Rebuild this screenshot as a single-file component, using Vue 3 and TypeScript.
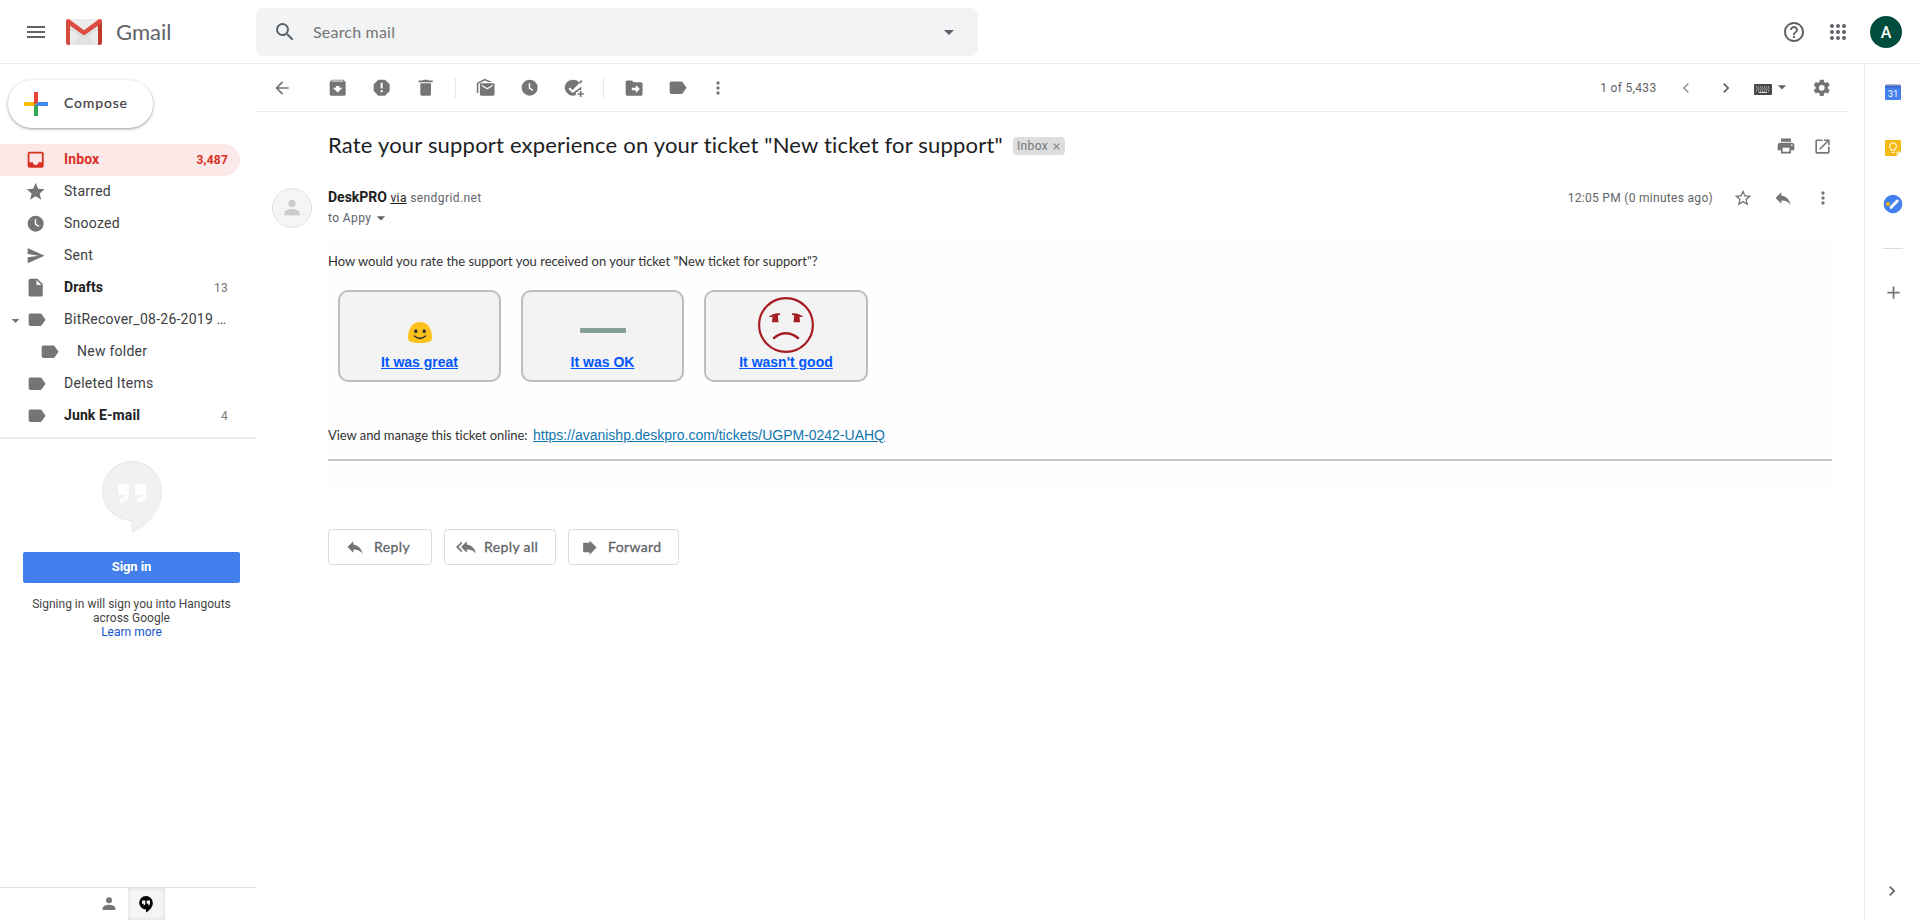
<script setup lang="ts">
import { h, type FunctionalComponent } from 'vue'

const paths: Record<string, string> = {
  menu: 'M3 18h18v-2H3v2zm0-5h18v-2H3v2zm0-7v2h18V6H3z',
  search: 'M15.5 14h-.79l-.28-.27A6.47 6.47 0 0 0 16 9.5 6.5 6.5 0 1 0 9.5 16c1.61 0 3.09-.59 4.23-1.57l.27.28v.79l5 4.99L20.49 19l-4.99-5zm-6 0a4.5 4.5 0 1 1 0-9 4.5 4.5 0 0 1 0 9z',
  drop: 'M7 10l5 5 5-5z',
  help: 'M11 18h2v-2h-2v2zm1-16C6.48 2 2 6.48 2 12s4.48 10 10 10 10-4.48 10-10S17.52 2 12 2zm0 18c-4.41 0-8-3.59-8-8s3.59-8 8-8 8 3.59 8 8-3.59 8-8 8zm0-14c-2.21 0-4 1.79-4 4h2c0-1.1.9-2 2-2s2 .9 2 2c0 2-3 1.75-3 5h2c0-2.25 3-2.5 3-5 0-2.21-1.79-4-4-4z',
  apps: 'M6 8a2 2 0 1 0 0-4 2 2 0 0 0 0 4zm6 12a2 2 0 1 0 0-4 2 2 0 0 0 0 4zm-6 0a2 2 0 1 0 0-4 2 2 0 0 0 0 4zm0-6a2 2 0 1 0 0-4 2 2 0 0 0 0 4zm6 0a2 2 0 1 0 0-4 2 2 0 0 0 0 4zm4-8a2 2 0 1 0 4 0 2 2 0 0 0-4 0zm-4 2a2 2 0 1 0 0-4 2 2 0 0 0 0 4zm6 6a2 2 0 1 0 0-4 2 2 0 0 0 0 4zm0 6a2 2 0 1 0 0-4 2 2 0 0 0 0 4z',
  back: 'M20 11H7.83l5.59-5.59L12 4l-8 8 8 8 1.41-1.41L7.83 13H20v-2z',
  archive: 'M20.54 5.23l-1.39-1.68C18.88 3.21 18.47 3 18 3H6c-.47 0-.88.21-1.16.55L3.46 5.23C3.17 5.57 3 6.02 3 6.5V19c0 1.1.9 2 2 2h14c1.1 0 2-.9 2-2V6.5c0-.48-.17-.93-.46-1.27zM12 17.5L6.5 12H10v-2h4v2h3.5L12 17.5zM5.12 5l.81-1h12l.94 1H5.12z',
  spam: 'M15.73 3H8.27L3 8.27v7.46L8.27 21h7.46L21 15.73V8.27L15.73 3zM12 17.3a1.3 1.3 0 1 1 0-2.6 1.3 1.3 0 0 1 0 2.6zm1.1-4.3h-2.2V6.500h2.2V13z',
  trash: 'M6 19c0 1.1.9 2 2 2h8c1.1 0 2-.9 2-2V7H6v12zM19 4h-3.500l-1-1h-5l-1 1H4v2h16V4z',
  unread: 'M22 8.500v11c0 .8-.7 1.500-1.500 1.500H7c-.8 0-1.500-.7-1.500-1.500v-11C5.500 7.700 6.200 7 7 7h13.500c.8 0 1.500.7 1.500 1.500zM13.750 14l6.250-3.800V8.600L13.750 12.400 7.500 8.600v1.600L13.750 14zM2 18V7.500c0-.6.300-1.100.8-1.400L11 2l8.500 3.600H15L11 3.900 3.800 7.500V18H2z',
  clock: 'M12 3a9 9 0 1 0 0 18 9 9 0 0 0 0-18zm3.300 12.700L11 13V7h1.600v5.200l3.600 2.200-.9 1.300z',
  addtask: 'M11 3a9 9 0 1 0 3.500 17.300V17H17v-2h3c.6-1.200.8-2.500.6-4l-9.900 7-4.500-4.500 1.700-1.700 2.800 2.800 8.100-8.200A9 9 0 0 0 11 3zM20.300 3.300L22 5l-3 3-1.500-1.500 2.800-3.200zM19 16v2.300h-2.500V20H19v2.500h1.800V20h2.500v-1.700h-2.500V16H19z',
  move: 'M20 6h-8l-2-2H5c-1.100 0-2 .9-2 2v13c0 1.100.9 2 2 2h15c1.100 0 2-.9 2-2V8c0-1.100-.9-2-2-2zm-5.500 12v-3H10v-3h4.500V9l4.500 4.500-4.500 4.500z',
  label: 'M17.630 5.840C17.270 5.330 16.670 5 16 5L5 5.010C3.900 5.010 3 5.900 3 7v10c0 1.100.9 1.990 2 1.990L16 19c.67 0 1.270-.33 1.630-.84L22 12l-4.370-6.160z',
  more: 'M12 8a2 2 0 1 0 0-4 2 2 0 0 0 0 4zm0 2a2 2 0 1 0 0 4 2 2 0 0 0 0-4zm0 6a2 2 0 1 0 0 4 2 2 0 0 0 0-4z',
  left: 'M15.410 7.410L14 6l-6 6 6 6 1.410-1.410L10.830 12z',
  right: 'M10 6L8.590 7.410 13.170 12l-4.580 4.590L10 18l6-6z',
  gear: 'M19.430 12.980c.04-.32.07-.64.07-.98s-.03-.66-.07-.98l2.110-1.650c.19-.15.24-.42.12-.64l-2-3.460c-.12-.22-.39-.3-.61-.22l-2.490 1c-.52-.4-1.080-.73-1.690-.98l-.38-2.650A.488.488 0 0 0 14 2h-4c-.25 0-.46.18-.49.42l-.38 2.650c-.61.25-1.170.59-1.690.98l-2.490-1c-.23-.09-.49 0-.61.22l-2 3.460c-.13.22-.07.49.12.64l2.110 1.650c-.04.32-.07.65-.07.98s.03.66.07.98l-2.110 1.650c-.19.15-.24.42-.12.64l2 3.460c.12.22.39.3.61.22l2.490-1c.52.4 1.080.73 1.690.98l.38 2.650c.03.24.24.42.49.42h4c.25 0 .46-.18.49-.42l.38-2.650c.61-.25 1.170-.59 1.690-.98l2.490 1c.23.09.49 0 .61-.22l2-3.460c.12-.22.07-.49-.12-.64l-2.110-1.650zM12 15.500a3.500 3.500 0 1 1 0-7 3.500 3.500 0 0 1 0 7z',
  print: 'M19 8H5c-1.660 0-3 1.340-3 3v6h4v4h12v-4h4v-6c0-1.660-1.340-3-3-3zm-3 11H8v-5h8v5zm3-7c-.55 0-1-.45-1-1s.45-1 1-1 1 .45 1 1-.45 1-1 1zm-1-9H6v4h12V3z',
  open: 'M19 19H5V5h7V3H5a2 2 0 0 0-2 2v14a2 2 0 0 0 2 2h14c1.100 0 2-.9 2-2v-7h-2v7zM14 3v2h3.590l-9.830 9.830 1.410 1.410L19 6.410V10h2V3h-7z',
  star: 'M12 17.270L18.180 21l-1.640-7.030L22 9.240l-7.190-.61L12 2 9.190 8.630 2 9.240l5.460 4.730L5.820 21z',
  starOutline: 'M22 9.240l-7.190-.62L12 2 9.190 8.630 2 9.240l5.460 4.730L5.820 21 12 17.270 18.180 21l-1.630-7.030L22 9.240zM12 15.400l-3.760 2.270 1-4.280-3.320-2.880 4.380-.38L12 6.100l1.710 4.040 4.380.38-3.320 2.880 1 4.280L12 15.400z',
  reply: 'M10 9V5l-7 7 7 7v-4.100c5 0 8.500 1.600 11 5.100-1-5-4-10-11-11z',
  replyAll: 'M7 8V5l-7 7 7 7v-3l-4-4 4-4zm6 1V5l-7 7 7 7v-4.100c5 0 8.500 1.600 11 5.100-1-5-4-10-11-11z',
  forward: 'M4 6h8V3l9 9-9 9v-3H4z',
  inbox: 'M19 3H5a2 2 0 0 0-2 2v14a2 2 0 0 0 2 2h14a2 2 0 0 0 2-2V5a2 2 0 0 0-2-2zm0 12h-4a3 3 0 0 1-6 0H5V5h14v10z',
  send: 'M3 20.500l19-8.500L3 3.500v6.700L15.500 12 3 13.800z',
  draft: 'M14 2H6c-1.100 0-2 .9-2 2v16c0 1.100.9 2 2 2h12c1.100 0 2-.9 2-2V8l-6-6zm-1 7V3.500L18.500 9H13z',
  person: 'M12 11a4 4 0 1 0 0-8 4 4 0 0 0 0 8zm0 2c-3 0-8.500 1.400-8.500 4.700V20h17v-2.300C20.500 14.400 15 13 12 13z',
  plus: 'M19 13h-6v6h-2v-6H5v-2h6V5h2v6h6v2z',
  close: 'M19 6.400L17.600 5 12 10.600 6.400 5 5 6.400l5.600 5.600L5 17.600 6.400 19l5.600-5.600 5.600 5.600 1.400-1.400-5.600-5.600z',
}

const Icon: FunctionalComponent<{ name: string; size?: number }> = (props) =>
  h('svg', { width: props.size ?? 21.33, height: props.size ?? 21.33, viewBox: '0 0 24 24', fill: 'currentColor' }, [
    h('path', { d: paths[props.name], 'fill-rule': 'evenodd' }),
  ])
Icon.props = ['name', 'size']

interface Folder {
  label: string
  icon: string
  count?: string
  bold?: boolean
  active?: boolean
  expand?: boolean
  child?: boolean
}

const folders: Folder[] = [
  { label: 'Inbox', icon: 'inbox', count: '3,487', bold: true, active: true },
  { label: 'Starred', icon: 'star' },
  { label: 'Snoozed', icon: 'clock' },
  { label: 'Sent', icon: 'send' },
  { label: 'Drafts', icon: 'draft', count: '13', bold: true },
  { label: 'BitRecover_08-26-2019 …', icon: 'label', expand: true },
  { label: 'New folder', icon: 'label', child: true },
  { label: 'Deleted Items', icon: 'label' },
  { label: 'Junk E-mail', icon: 'label', count: '4', bold: true },
]

const toolGroups: string[][] = [
  ['archive', 'spam', 'trash'],
  ['unread', 'clock', 'addtask'],
  ['move', 'label', 'more'],
]
</script>

<template>
  <div class="gmail">
    <header class="header">
      <div class="brand">
        <Icon name="menu" :size="24" />
        <svg class="logo" width="36" height="26" viewBox="0 0 36 26">
          <rect x="2" width="32" height="26" rx="1.500" fill="#ececec" />
          <path d="M4 26L14 16l4 3 4-3 10 10z" fill="#e2e2e2" />
          <path d="M4 6l14 10.500L32 6v5L18 20 4 11z" fill="#d5d5d5" opacity=".5" />
          <path d="M0 2.500v21.300C0 25 .9 26 2.200 26H4V5z" fill="#d54b3d" />
          <path d="M36 2.500v21.300c0 1.200-.9 2.200-2.200 2.200H32V5z" fill="#c0392b" />
          <path d="M0 2.300C0 .2 2 -.5 3.500.5L18 11.300 32.500.5C34 -.5 36 .2 36 2.300c0 1.200-.6 1.900-1.300 2.400L18 16.500 1.300 4.700C.6 4.200 0 3.500 0 2.300z" fill="#de4b3f" />
        </svg>
        <span class="wordmark">Gmail</span>
      </div>
      <div class="search">
        <Icon name="search" :size="24" />
        <span class="placeholder">Search mail</span>
        <Icon name="drop" :size="24" />
      </div>
      <div class="account">
        <Icon name="help" :size="24" />
        <Icon name="apps" :size="24" />
        <div class="me">A</div>
      </div>
    </header>

    <div class="body">
      <aside class="sidebar">
        <button class="compose">
          <svg width="24" height="24" viewBox="0 0 24 24">
            <path d="M10 0h4v10l-4 4z" fill="#ea4335" />
            <path d="M0 10h10v4H0z" fill="#fbbc04" />
            <path d="M10 14l4-4v14h-4z" fill="#34a853" />
            <path d="M14 10h10v4H12z" fill="#4285f4" />
          </svg>
          <span>Compose</span>
        </button>
        <nav>
          <div
            v-for="f in folders"
            :key="f.label"
            class="folder"
            :class="{ active: f.active, bold: f.bold, child: f.child, tag: f.icon === 'label' }"
          >
            <span class="twisty"><Icon v-if="f.expand" name="drop" :size="19" /></span>
            <Icon :name="f.icon" />
            <span class="name">{{ f.label }}</span>
            <span class="count">{{ f.count }}</span>
          </div>
        </nav>
        <div class="hangouts">
          <svg class="bubble" width="60" height="72" viewBox="0 0 60 72">
            <path d="M30 .5C13.700.5.5 13.700.5 30S13.700 59.500 30 59.500V71.500C45 64 59.500 49 59.500 30 59.500 13.700 46.300.5 30 .5z" fill="#f1f1f1" stroke="#e8e8e8" />
            <path d="M16 25q0-2 2-2h7q2 0 2 2v8q0 8-9 8v-3q4 0 5-4h-5q-2 0-2-2zM33 25q0-2 2-2h7q2 0 2 2v8q0 8-9 8v-3q4 0 5-4h-5q-2 0-2-2z" fill="#fff" />
          </svg>
          <button class="signin">Sign in</button>
          <p>Signing in will sign you into Hangouts<br />across Google<br /><a>Learn more</a></p>
        </div>
        <div class="tabs">
          <div class="tab"><Icon name="person" :size="18" /></div>
          <div class="tab on">
            <svg width="14" height="17" viewBox="0 0 14 17">
              <path d="M7 0a6.800 6.800 0 0 0 0 13.600V16.500C10.500 14.500 13.800 11.300 13.800 6.800A6.800 6.800 0 0 0 7 0z" fill="#000" />
              <path d="M3 4.500h3.300v3Q6.300 9.500 4.300 9.500L5 7.800H3zM7.700 4.500H11v3Q11 9.500 9 9.500l.7-1.700h-2z" fill="#f5f5f5" />
            </svg>
          </div>
        </div>
      </aside>

      <main class="main">
        <div class="toolbar">
          <div class="tool back"><Icon name="back" :size="20" /></div>
          <div v-for="(group, i) in toolGroups" :key="i" class="group">
            <div v-for="t in group" :key="t" class="tool" :class="t">
              <Icon :name="t" :size="t === 'more' ? 20 : 21.33" />
            </div>
          </div>
          <div class="pager">
            <span>1 of 5,433</span>
            <Icon class="dim prev" name="left" :size="20" />
            <Icon class="next" name="right" :size="20" />
            <svg class="keyboard" width="18" height="11" viewBox="0 0 18 11">
              <rect width="18" height="11" rx="1" fill="#484848" />
              <path d="M2 3h14M2.500 5h13M2 7h14" stroke="#ddd" stroke-width="1" stroke-dasharray="1 1" />
              <path d="M5 8.500h8" stroke="#ddd" />
            </svg>
            <Icon class="caret" name="drop" :size="20" />
            <Icon class="gear" name="gear" :size="19.5" />
          </div>
        </div>

        <div class="subject">
          <h1>Rate your support experience on your ticket "New ticket for support"</h1>
          <span class="chip">Inbox <Icon name="close" :size="11" /></span>
          <div class="subject-actions">
            <Icon name="print" :size="20" />
            <Icon name="open" :size="19" />
          </div>
        </div>

        <div class="sender">
          <div class="avatar"><Icon name="person" :size="22" /></div>
          <div class="who">
            <div class="from"><b>DeskPRO</b> <u>via</u> <span>sendgrid.net</span></div>
            <div class="to">to Appy <Icon name="drop" :size="20" /></div>
          </div>
          <div class="meta">
            <span>12:05 PM (0 minutes ago)</span>
            <Icon name="starOutline" :size="20" />
            <Icon name="reply" :size="20" />
            <Icon name="more" :size="20" />
          </div>
        </div>

        <section class="message">
          <p class="question">How would you rate the support you received on your ticket "New ticket for support"?</p>
          <div class="ratings">
            <div class="rating">
              <svg class="smile" width="24" height="21" viewBox="0 0 24 21">
                <path d="M12 0C5 0 0 5 0 16.500 0 19.500 4 21 12 21s12-1.500 12-4.500C24 5 19 0 12 0z" fill="#fcc21b" />
                <ellipse cx="7.800" cy="9.200" rx="1.600" ry="2" fill="#2f2f2f" />
                <ellipse cx="16.200" cy="9.200" rx="1.600" ry="2" fill="#2f2f2f" />
                <path d="M6.500 14q5.500 4.800 11 0" fill="none" stroke="#2f2f2f" stroke-width="1.500" stroke-linecap="round" />
              </svg>
              <a>It was great</a>
            </div>
            <div class="rating">
              <div class="dash"></div>
              <a>It was OK</a>
            </div>
            <div class="rating wide">
              <svg class="frown" width="56" height="56" viewBox="0 0 56 56">
                <circle cx="28" cy="28" r="26.900" fill="none" stroke="#a61c22" stroke-width="2.200" />
                <path d="M10.500 20q5-4.500 11.500-3.700v1.500l-2.200.7.700 6.800h-6.500l.5-5.500q-2 .2-4 .2zM45.500 20q-5-4.500-11.500-3.700v1.500l2.200.7-.7 6.800h6.500l-.5-5.500q2 .2 4 .2z" fill="#a61c22" />
                <path d="M16 41q11.500-9.500 24 0" fill="none" stroke="#a61c22" stroke-width="2.500" stroke-linecap="round" />
              </svg>
              <a>It wasn't good</a>
            </div>
          </div>
          <p class="manage">
            <span>View and manage this ticket online:</span>
            <a>https://avanishp.deskpro.com/tickets/UGPM-0242-UAHQ</a>
          </p>
        </section>

        <div class="replies">
          <button class="r1"><Icon name="reply" :size="20" /><span>Reply</span></button>
          <button class="r2"><Icon name="replyAll" :size="20" /><span>Reply all</span></button>
          <button class="r3"><Icon name="forward" :size="19" /><span>Forward</span></button>
        </div>
      </main>

      <aside class="panel">
        <svg width="16" height="16" viewBox="0 0 16 16">
          <rect x=".5" width="15" height="4" fill="#b4bccb" />
          <rect y="1.500" width="16" height="3" fill="#3c64c8" />
          <rect y="3.500" width="16" height="12.500" rx=".8" fill="#4380ee" />
          <text x="8" y="13" text-anchor="middle" font-size="9.500" fill="#fff">31</text>
        </svg>
        <svg width="16" height="16" viewBox="0 0 16 16">
          <path d="M1 0h14q1 0 1 1v10.500L11.500 16H1q-1 0-1-1V1q0-1 1-1z" fill="#f5b912" />
          <path d="M16 11.500h-4.500V16z" fill="#fce8b0" />
          <path d="M6.300 10.300V9.300a3.400 3.400 0 1 1 3.400 0v1zM6.300 12.500h3.400" fill="none" stroke="#fff3cf" stroke-width="1.200" />
        </svg>
        <svg width="20" height="20" viewBox="0 0 20 20">
          <circle cx="10" cy="10" r="9.300" fill="#4380ee" />
          <circle cx="5" cy="10" r="2" fill="#f7b908" />
          <path d="M8.200 13.300l6-6.300" stroke="#fff" stroke-width="3" stroke-linecap="round" />
        </svg>
        <div class="rule"></div>
        <Icon name="plus" :size="21" />
        <Icon class="expand" name="right" :size="20" />
      </aside>
    </div>
  </div>
</template>

<style>
body { margin: 0; background: #fff; }
</style>

<style scoped>
.gmail { width: 1920px; height: 920px; display: flex; flex-direction: column; overflow: hidden; font-family: Roboto, sans-serif; color: #202124; }
svg { display: block; flex: none; }
button { font-family: inherit; margin: 0; }
p { margin: 0; }

.header { height: 64px; box-sizing: border-box; border-bottom: 1px solid #ebebeb; display: flex; align-items: center; color: #5f6368; padding-top: 1px; }
.brand { width: 256px; box-sizing: border-box; padding-left: 24px; display: flex; align-items: center; }
.logo { margin-left: 18px; }
.wordmark { font-family: Lato, sans-serif; font-size: 22px; margin: -1px 0 0 14px; letter-spacing: 0; }
.search { width: 722px; height: 48px; box-sizing: border-box; border-radius: 8px; background: #f1f3f4; display: flex; align-items: center; padding: 0 17px; }
.placeholder { flex: 1; margin: -1px 0 0 16px; font-family: Lato, sans-serif; font-size: 16px; color: #757575; letter-spacing: 0.2px; }
.account { margin-left: auto; display: flex; align-items: center; gap: 20px; padding-right: 18px; }
.me { width: 32px; height: 32px; border-radius: 50%; background: #004d40; color: #fff; font-size: 16px; line-height: 34px; text-align: center; font-weight: 500; }

.body { flex: 1; display: flex; min-height: 0; }
.sidebar { width: 256px; display: flex; flex-direction: column; }
.compose { align-self: flex-start; width: 145px; height: 48px; margin: 16px 0 16px 8px; border: 0; border-radius: 24px; background: #fff; box-shadow: 0 1px 2px rgba(60, 64, 67, .35), 0 1px 3px 1px rgba(60, 64, 67, .15); padding: 0 16px; display: flex; align-items: center; gap: 16px; font-family: Lato, sans-serif; font-size: 14px; letter-spacing: .85px; color: #3c4043; }
.compose span { margin-top: -3px; -webkit-text-stroke: .2px #3c4043; }
.folder { width: 240px; height: 32px; box-sizing: border-box; border-radius: 0 16px 16px 0; display: flex; align-items: center; padding-right: 12px; color: #757575; font-size: 14px; letter-spacing: .2px; }
.folder .twisty { width: 25px; height: 19px; flex: none; box-sizing: border-box; padding-left: 6px; }
.folder .name { margin: -2px 0 0 17.700px; flex: 1; color: #3c4043; letter-spacing: .25px; white-space: nowrap; }
.folder .count { font-size: 12px; letter-spacing: .3px; }
.folder.tag .twisty { width: 26.300px; }
.folder.tag .name { margin-left: 16.400px; }
.folder.child { padding-left: 13px; }
.folder.bold .name { font-weight: 700; color: #202124; letter-spacing: .1px; }
.folder.active { background: #fce8e6; color: #d93025; }
.folder.active .name { color: #d93025; }
.folder.active .count { font-weight: 700; font-size: 12px; letter-spacing: .2px; margin-top: -1px; }

.hangouts { flex: 1; margin-top: 5px; border-top: 2px solid #ededed; display: flex; flex-direction: column; align-items: center; font-size: 12px; text-align: center; color: #444; }
.bubble { margin: 22px 0 0 8px; }
.signin { width: 217px; height: 31px; margin: 19px 0 0 7px; border: 0; border-radius: 2px; background: #427fed; color: #fff; font-size: 13px; font-weight: 700; line-height: 30px; letter-spacing: -.1px; padding: 0 0 1px; }
.hangouts p { margin: 14px 0 0 7px; line-height: 14px; letter-spacing: 0; }
.hangouts a { color: #1155cc; }
.tabs { height: 33px; box-sizing: border-box; border-top: 1px solid #e2e2e2; display: flex; justify-content: center; padding-right: 1px; }
.tab { width: 37px; display: flex; align-items: center; justify-content: center; color: #757575; }
.tab.on { background: #f5f5f5; box-shadow: inset 0 0 4px rgba(0, 0, 0, .12); }

.main { width: 1608px; box-sizing: border-box; color: #757575; }
.toolbar { width: 1592px; height: 48px; box-sizing: border-box; border-bottom: 1px solid #ebebeb; display: flex; align-items: center; padding: 1px 17px 0 4px; }
.tool { width: 44px; display: flex; justify-content: center; }
.back { margin-right: 12px; }
.group { display: flex; align-items: center; }
.group + .group { margin-left: 7px; padding-left: 8px; border-left: 1px solid #e6e6e6; height: 20px; }
.tool.more { width: 36px; }
.pager { margin-left: auto; display: flex; align-items: center; font-size: 12px; letter-spacing: .33px; height: 20px; color: #5f6368; }
.prev { margin-left: 19px; color: #9e9e9e; }
.next { margin-left: 20px; }
.keyboard { margin: 3px 0 0 18px; }
.caret { margin: -3px 0 0 0; }
.gear { margin-left: 20px; color: #757575; }

.subject { height: 68px; box-sizing: border-box; display: flex; align-items: center; padding: 0 32px 0 72px; width: 1608px; }
.subject h1 { margin: -3px 0 0; width: 675px; font-family: Lato, sans-serif; font-size: 22px; font-weight: 400; color: #202124; white-space: nowrap; letter-spacing: .2px; }
.chip { margin-left: 10px; height: 18px; width: 52px; box-sizing: border-box; padding: 0 3px 0 4px; border-radius: 4px; background: #ddd; color: #777; font-size: 12px; letter-spacing: .35px; display: flex; align-items: center; justify-content: space-between; }
.subject-actions { margin-left: auto; display: flex; align-items: center; gap: 17px; color: #757575; }

.sender { height: 56px; display: flex; padding: 8px 31px 0 16px; box-sizing: border-box; }
.avatar { width: 40px; height: 40px; box-sizing: border-box; border: 1px solid #e2e2e2; border-radius: 50%; background: #f5f5f5; color: #ccc; display: flex; align-items: center; justify-content: center; }
.who { margin: -1px 0 0 16px; font-size: 12px; letter-spacing: .4px; color: #5f6368; }
.from { line-height: 20px; white-space: nowrap; }
.from b { font-size: 14px; color: #202124; letter-spacing: 0; }
.from u { color: #222; }
.to { line-height: 20px; display: flex; align-items: center; }
.meta { margin-left: auto; height: 20px; display: flex; align-items: center; font-size: 12px; letter-spacing: .3px; color: #5f6368; }
.meta svg { margin-left: 20px; color: #757575; }

.message { margin: 0 32px 0 72px; height: 254px; background: #fefefe; color: #333; display: flex; flex-direction: column; }
.question { height: 54px; line-height: 51px; font-family: Lato, sans-serif; font-size: 13px; white-space: nowrap; }
.ratings { display: flex; gap: 20px; padding-left: 10px; }
.rating { width: 163px; height: 92px; box-sizing: border-box; border: 2px solid #bdbdbd; border-radius: 10px; background: #f3f3f3; display: flex; flex-direction: column; align-items: center; justify-content: flex-end; padding-bottom: 10px; font-family: "Liberation Sans", sans-serif; font-size: 14px; line-height: 16px; font-weight: 700; color: #0057ff; }
.rating.wide { width: 164px; }
.rating a, .manage a { text-decoration: underline; }
.smile { margin-bottom: 11px; }
.dash { width: 46px; height: 5px; border-radius: 1px; background: #859e95; margin-bottom: 21px; }
.frown { margin-bottom: 1px; }
.manage { margin-top: 42px; height: 35px; border-bottom: 2px solid #c4c4c4; line-height: 22px; display: flex; font-family: Lato, sans-serif; font-size: 13px; letter-spacing: -.05px; white-space: nowrap; }
.manage span { width: 205px; }
.manage a { font-family: "Liberation Sans", sans-serif; font-size: 14px; letter-spacing: -.01px; color: #1176b0; }

.replies { display: flex; gap: 12px; margin: 39px 0 0 72px; }
.replies button { height: 36px; box-sizing: border-box; border: 1px solid #dadce0; border-radius: 4px; background: #fff; color: #757575; padding: 0; display: flex; align-items: center; font-family: Lato, sans-serif; font-size: 14px; letter-spacing: .38px; }
.replies span { color: #5f6368; -webkit-text-stroke: .3px #5f6368; margin-top: -2px; }
.replies .r1 { width: 104px; padding-left: 16px; gap: 9px; }
.replies .r2 { width: 112px; padding-left: 11px; gap: 8px; }
.replies .r3 { width: 111px; padding-left: 11px; gap: 9px; }

.panel { width: 56px; box-sizing: border-box; border-left: 1px solid #ebebeb; display: flex; flex-direction: column; align-items: center; padding: 20px 0 19px 1px; color: #757575; }
.panel > svg:nth-child(2) { margin-top: 40px; }
.panel > svg:nth-child(3) { margin-top: 38px; }
.rule { width: 20px; height: 1px; background: #dadada; margin: 34px 0 33px; }
.expand { margin: auto 2px 0 0; color: #5f6368; }
</style>
